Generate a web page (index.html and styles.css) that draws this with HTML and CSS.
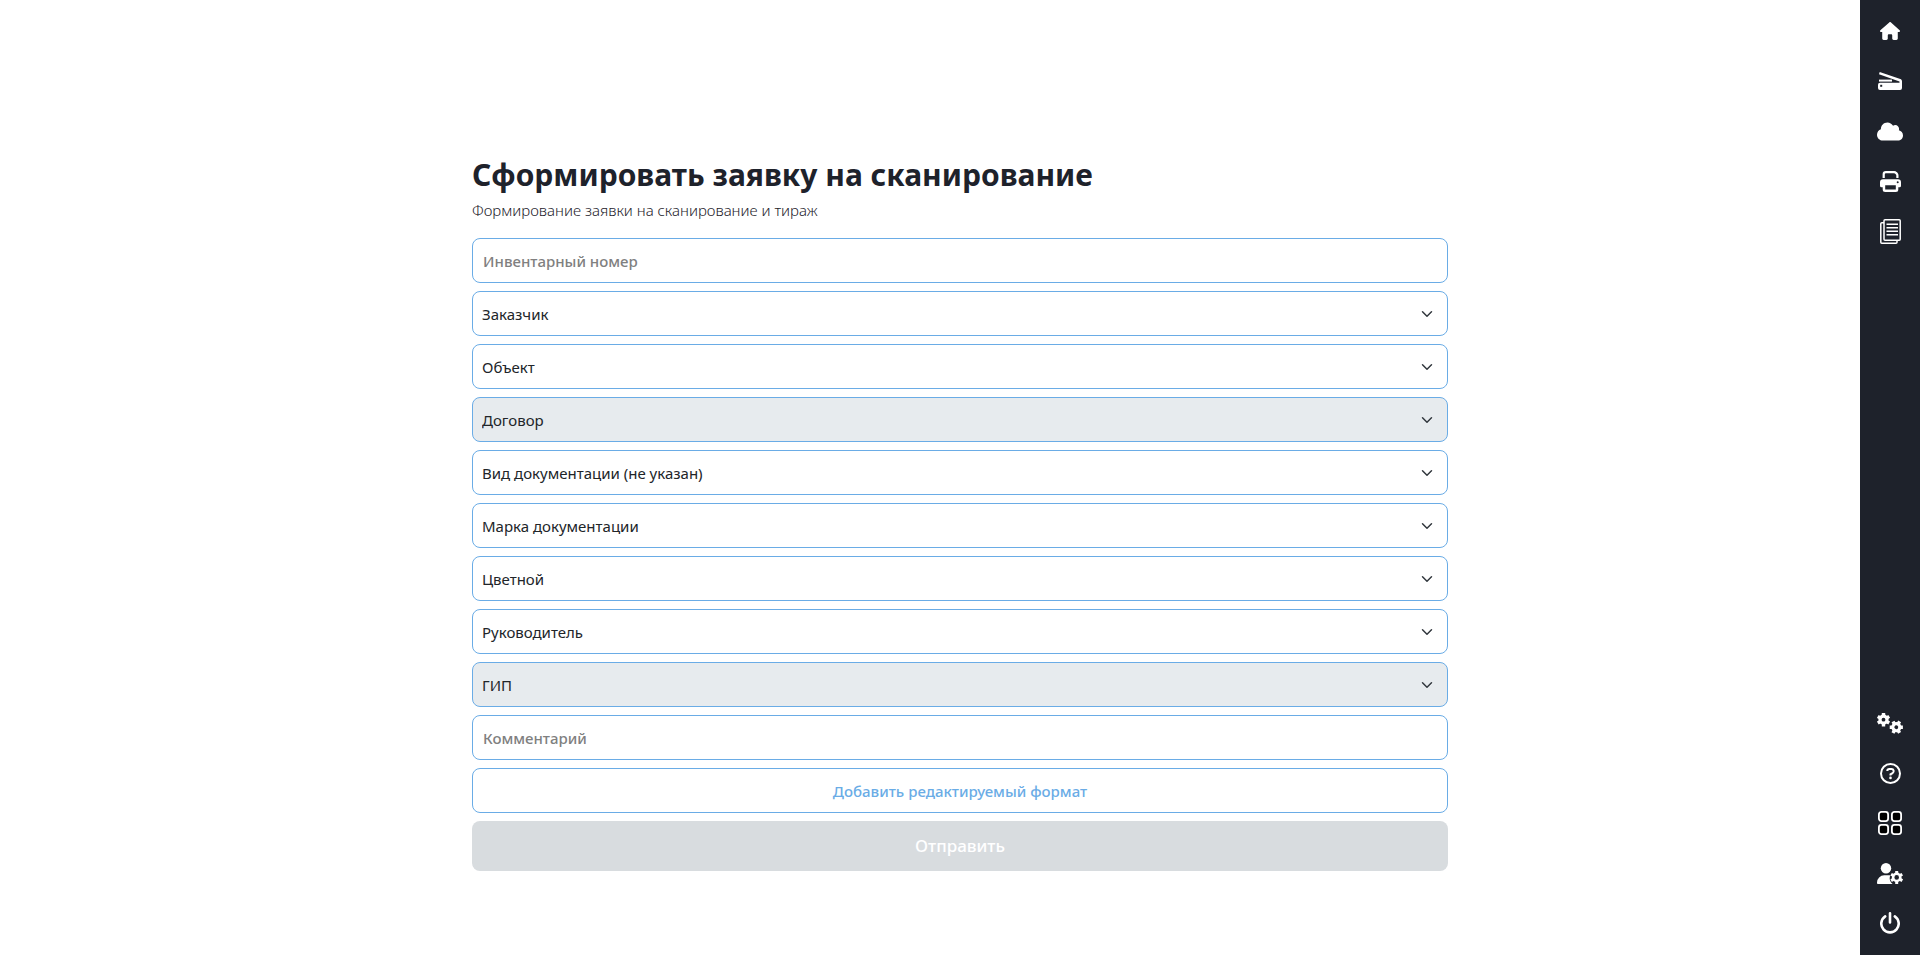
FILE: index.html
```html
<!DOCTYPE html>
<html lang="ru">
<head>
<meta charset="utf-8">
<meta name="viewport" content="width=device-width, initial-scale=1">
<title>Заявка на сканирование</title>
<link rel="stylesheet" href="styles.css">
</head>
<body>
<main class="page">
  <form class="form">
    <header class="form-head">
      <h1 class="title">Сформировать заявку на сканирование</h1>
      <p class="subtitle">Формирование заявки на сканирование и тираж</p>
    </header>
    <input class="field" type="text" placeholder="Инвентарный номер" aria-label="Инвентарный номер">
    <select class="field select" aria-label="Заказчик"><option>Заказчик</option></select>
    <select class="field select" aria-label="Объект"><option>Объект</option></select>
    <select class="field select" aria-label="Договор" disabled><option>Договор</option></select>
    <select class="field select" aria-label="Вид документации"><option>Вид документации (не указан)</option></select>
    <select class="field select" aria-label="Марка документации"><option>Марка документации</option></select>
    <select class="field select" aria-label="Цветной"><option>Цветной</option></select>
    <select class="field select" aria-label="Руководитель"><option>Руководитель</option></select>
    <select class="field select" aria-label="ГИП" disabled><option>ГИП</option></select>
    <input class="field" type="text" placeholder="Комментарий" aria-label="Комментарий">
    <button class="field add" type="button">Добавить редактируемый формат</button>
    <button class="submit" type="submit" disabled>Отправить</button>
  </form>
</main>
<nav class="sidebar" aria-label="Меню">
  <div class="group">
    <a class="item" href="#" aria-label="Главная">
      <svg width="20" height="18" viewBox="0 0 576 512" fill="currentColor"><path d="M575.8 255.5c0 18-15 32.1-32 32.1h-32l.7 160.2c0 2.7-.2 5.4-.5 8.1V472c0 22.1-17.9 40-40 40H456c-1.1 0-2.2 0-3.3-.1c-1.4 .1-2.8 .1-4.2 .1H416 392c-22.1 0-40-17.9-40-40V448 384c0-17.7-14.3-32-32-32H256c-17.7 0-32 14.3-32 32v64 24c0 22.1-17.9 40-40 40H160 128.1c-1.5 0-3-.1-4.5-.2c-1.2 .1-2.4 .2-3.6 .2H104c-22.1 0-40-17.9-40-40V360c0-.9 0-1.9 .1-2.8V287.6H32c-18 0-32-14-32-32.1c0-9 3-17 10-24L266.4 8c7-7 15-8 22-8s15 2 21 7L564.8 231.5c8 7 12 15 11 24z"/></svg>
    </a>
    <a class="item" href="#" aria-label="Сканирование">
      <svg width="24" height="18" viewBox="0 0 24 18" fill="currentColor"><path d="M1.700 0 22.300 7.100C23.400 7.500 24 8.300 24 9.400V16a2 2 0 0 1-2 2H2a2 2 0 0 1-2-2v-3.300a2 2 0 0 1 2-2h19.500V9.500L1 2.300z"/><path d="M1 7.600h13v2H1z"/><path d="M2.200 12.800h2v2h-2z" class="cut"/></svg>
    </a>
    <a class="item" href="#" aria-label="Облако">
      <svg width="26" height="21" viewBox="0 0 640 512" fill="currentColor"><path d="M0 336c0 79.500 64.500 144 144 144H512c70.700 0 128-57.300 128-128c0-61.900-44-113.600-102.400-125.400c4.100-10.700 6.400-22.400 6.400-34.600c0-53-43-96-96-96c-19.700 0-38.100 6-53.300 16.200C367 64.200 315.300 32 256 32C167.600 32 96 103.600 96 192c0 2.700 .1 5.400 .2 8.100C40.200 219.800 0 273.200 0 336z"/></svg>
    </a>
    <a class="item" href="#" aria-label="Печать">
      <svg width="21" height="21" viewBox="0 0 21 21"><path fill="none" stroke="currentColor" stroke-width="2.200" d="M3.700 7V3.300A2.200 2.200 0 0 1 5.900 1.100h8.300a2.500 2.500 0 0 1 1.800.8l.7.700a2.500 2.500 0 0 1 .7 1.700V7"/><path fill="currentColor" fill-rule="evenodd" d="M3 8.200h15a3 3 0 0 1 3 3v3.500a1.500 1.500 0 0 1-1.500 1.500h-1.200v2.300a2.500 2.500 0 0 1-2.500 2.500H5.200a2.500 2.500 0 0 1-2.500-2.500v-2.300H1.500A1.500 1.500 0 0 1 0 14.700v-3.500a3 3 0 0 1 3-3zM5.200 14.200v4.300h10.600v-4.300zM17.700 10.200a1 1 0 1 0 0 2 1 1 0 0 0 0-2z"/></svg>
    </a>
    <a class="item" href="#" aria-label="Документы">
      <svg width="21" height="25" viewBox="0 0 21 25" fill="none" stroke="currentColor" stroke-width="1.500"><rect x="4" y=".8" width="16.200" height="20.400" rx="1"/><path d="M4 3.800H1.800a1 1 0 0 0-1 1V23.200a1 1 0 0 0 1 1H16a1 1 0 0 0 1-1V21.200M6.500 5.200h11.500M6.500 8.700h11.500M6.500 12.200h11.500M6.500 15.700h11.500"/></svg>
    </a>
  </div>
  <div class="group">
    <a class="item" href="#" aria-label="Настройки">
      <svg width="26" height="21" viewBox="0 0 26 21" fill="none" stroke="currentColor">
        <g transform="translate(6.500 6.700)"><circle r="3.500" stroke-width="3.200"/><path stroke-width="3.400" d="M0-4V-6.700M0 4V6.700M3.500-2 5.700-3.300M3.500 2 5.700 3.300M-3.500-2-5.700-3.300M-3.500 2-5.700 3.300"/></g>
        <g transform="translate(19.300 14.200) rotate(30)"><circle r="3.500" stroke-width="3.200"/><path stroke-width="3.400" d="M0-4V-6.700M0 4V6.700M3.500-2 5.700-3.300M3.500 2 5.700 3.300M-3.500-2-5.700-3.300M-3.500 2-5.700 3.300"/></g>
      </svg>
    </a>
    <a class="item" href="#" aria-label="Справка">
      <svg width="21" height="21" viewBox="0 0 21 21" fill="none" stroke="currentColor" stroke-width="2"><circle cx="10.500" cy="10.500" r="9.500"/><path d="M7.300 8.100V7.900A2 2 0 0 1 9.300 6h2.200a2.200 2.200 0 0 1 1.100 4.100l-2.100 1.300v1"/><circle cx="10.500" cy="14.900" r="1.300" fill="currentColor" stroke="none"/></svg>
    </a>
    <a class="item" href="#" aria-label="Приложения">
      <svg width="24" height="24" viewBox="0 0 24 24" fill="#000" stroke="currentColor" stroke-width="1.800"><rect x=".9" y=".9" width="9.200" height="9.200" rx="2.500"/><rect x="13.900" y=".9" width="9.200" height="9.200" rx="2.500"/><rect x=".9" y="13.900" width="9.200" height="9.200" rx="2.500"/><rect x="13.900" y="13.900" width="9.200" height="9.200" rx="2.500"/></svg>
    </a>
    <a class="item" href="#" aria-label="Пользователь">
      <svg width="26" height="21" viewBox="0 0 26 21" fill="none" stroke="currentColor">
        <circle cx="9" cy="5.200" r="5.200" fill="currentColor" stroke="none"/><path fill="currentColor" stroke="none" d="M7.200 12.300h4.300c.7 0 1.200.1 1.800.2-1.300 2.700-.6 6.400 2.300 8.500H1.200A1.200 1.200 0 0 1 0 19.500a7.200 7.200 0 0 1 7.200-7.200z"/>
        <g transform="translate(19.700 14.400)"><circle r="3.600" stroke-width="2.600"/><path stroke-width="3" d="M0-4V-6.500M0 4V6.500M3.500-2 5.600-3.200M3.500 2 5.600 3.200M-3.500-2-5.600-3.200M-3.500 2-5.600 3.200"/></g>
      </svg>
    </a>
    <a class="item" href="#" aria-label="Выход">
      <svg width="20" height="22" viewBox="0 0 20 22" fill="none" stroke="currentColor" stroke-width="2.600" stroke-linecap="round"><path d="M10 1.300V10.500M5.200 4.400a8.700 8.700 0 1 0 9.600 0"/></svg>
    </a>
  </div>
</nav>
</body>
</html>
```
FILE: styles.css
```css
* { box-sizing: border-box; }

body {
  margin: 0;
  min-height: 100vh;
  background: #fff;
  color: #1e222b;
  font-family: "Noto Sans", "Open Sans", sans-serif;
  font-size: 15px;
  line-height: 24px;
}

.page {
  padding: 152px 60px 24px;
}

.form {
  max-width: 976px;
  margin: 0 auto;
  display: flex;
  flex-direction: column;
  gap: 8px;
}

.form-head { margin-bottom: 8px; }

.title {
  margin: 0;
  font-size: 30px;
  line-height: 46px;
  font-weight: 700;
}

.subtitle {
  margin: 0;
  font-weight: 300;
}

.field {
  width: 100%;
  height: 45px;
  padding: 0 10px;
  border: 1px solid #6aace6;
  border-radius: 8px;
  background: #fff;
  color: #212529;
  font: inherit;
  font-weight: 500;
}

.field::placeholder {
  color: #808080;
  opacity: 1;
}

.select {
  appearance: none;
  padding: 0 36px 0 9px;
  background: #fff url("data:image/svg+xml,%3Csvg xmlns='http://www.w3.org/2000/svg' viewBox='0 0 16 16'%3E%3Cpath fill='none' stroke='%23343a40' stroke-linecap='round' stroke-linejoin='round' stroke-width='2' d='m2 5 6 6 6-6'/%3E%3C/svg%3E") no-repeat right 12px center / 16px 12px;
  font-weight: 400;
}

.select:disabled {
  background-color: #e7ebee;
  opacity: 1;
}

.add {
  color: #6aace6;
  cursor: pointer;
}

.submit {
  height: 50px;
  border: 0;
  border-radius: 8px;
  background: #d8dcdf;
  color: #fff;
  font: inherit;
  font-size: 17px;
  font-weight: 500;
}

.sidebar {
  position: fixed;
  top: 0;
  right: 0;
  bottom: 0;
  width: 60px;
  padding: 6px 0 7px;
  display: flex;
  flex-direction: column;
  justify-content: space-between;
  background: #1e222b;
}

.item {
  height: 50px;
  display: flex;
  align-items: center;
  justify-content: center;
  color: #fff;
}

.cut { fill: #1e222b; }
```
